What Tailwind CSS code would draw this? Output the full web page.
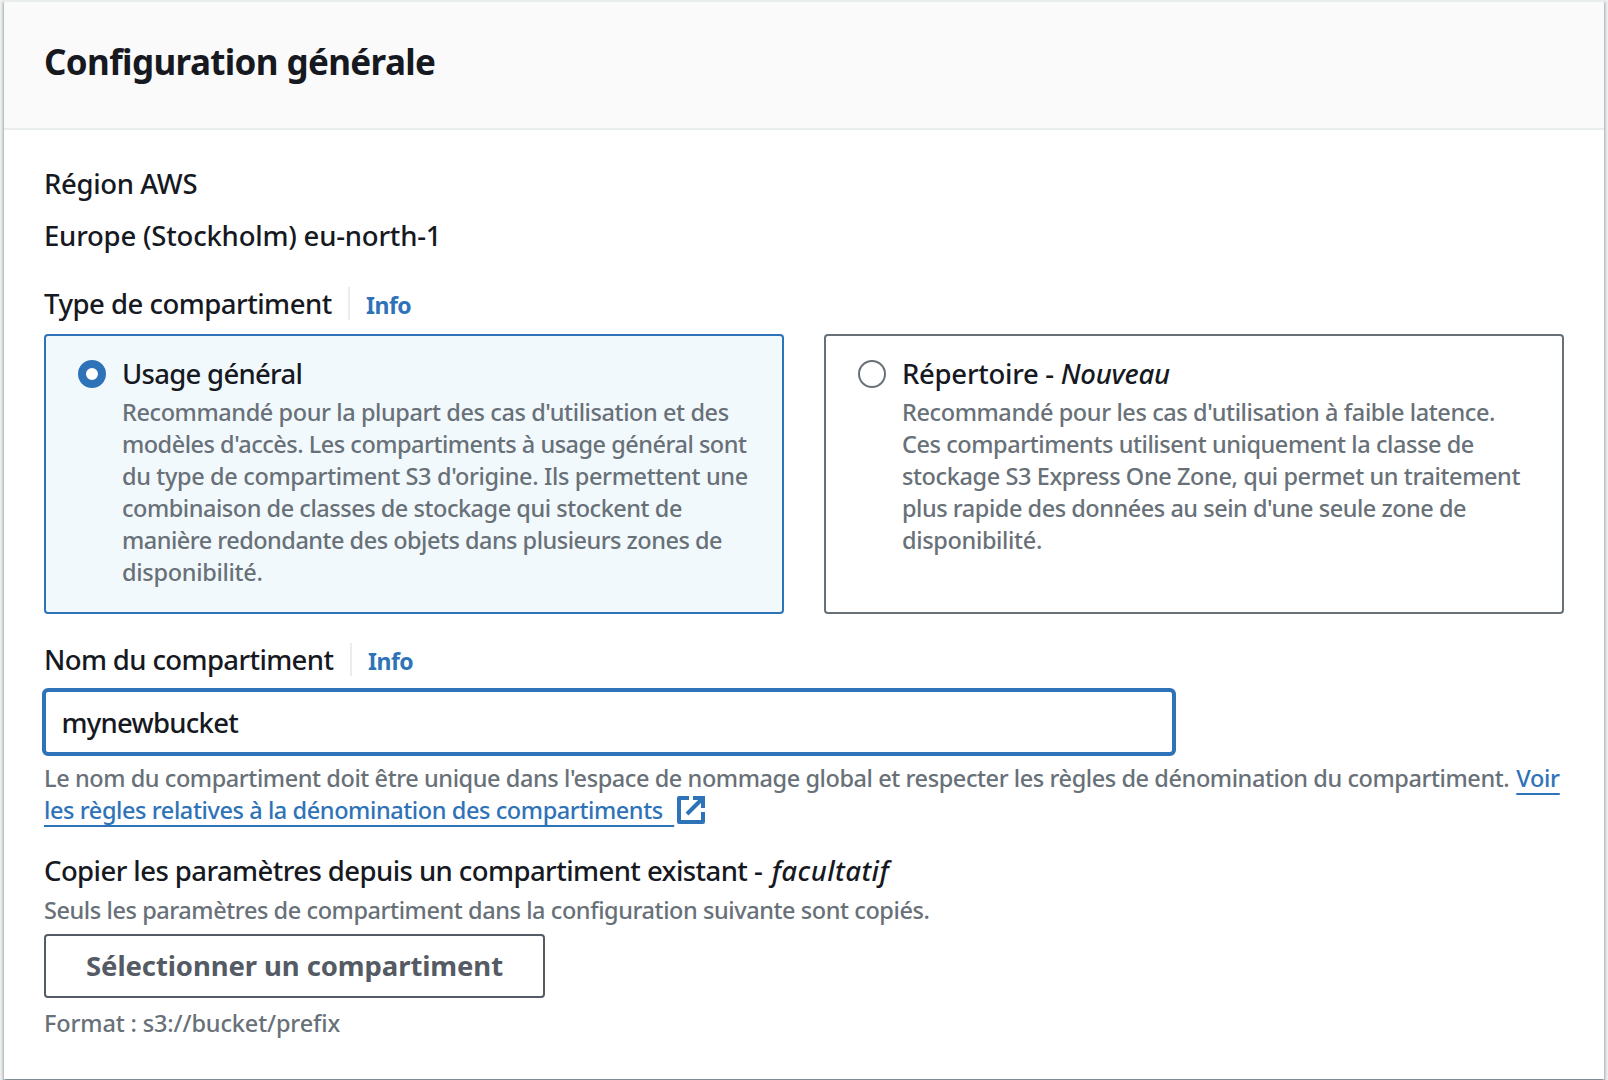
<!DOCTYPE html>
<html lang="fr">
<head>
<meta charset="utf-8">
<title>Configuration générale</title>
<script src="https://cdn.jsdelivr.net/npm/@tailwindcss/browser@4"></script>
</head>
<body class="h-[1080px] overflow-hidden bg-[#eff1f1] font-['Noto_Sans',sans-serif] font-medium text-[#16191f]">
<section class="mx-1 flex h-[1079px] flex-col border-t-2 border-[#eaeded] bg-white shadow-[0_2px_2px_0_rgba(0,28,36,0.3),2px_2px_2px_0_rgba(0,28,36,0.15),-2px_2px_2px_0_rgba(0,28,36,0.15)]">
  <header class="h-32 shrink-0 border-b-2 border-[#eaeded] bg-[#fafafa] px-10 pt-[34px]">
    <h1 class="text-[35px] leading-[52px] font-bold tracking-[-0.63px] whitespace-nowrap">Configuration générale</h1>
  </header>
  <div class="flex flex-col px-10 pt-8 text-[27.5px] leading-[44px] whitespace-nowrap">
    <div class="tracking-[-0.36px]">Région AWS</div>
    <div class="mt-2 tracking-[-0.21px]">Europe (Stockholm) eu-north-1</div>

    <div class="mt-6 flex h-11 items-baseline">
      <span class="w-[304px] tracking-[-0.5px]">Type de compartiment</span>
      <span class="mt-[5px] h-[33px] w-0.5 self-start bg-[#eaeded]"></span>
      <a class="ml-4 text-[23px] font-bold tracking-[-0.5px] text-[#2e73b8]">Info</a>
    </div>

    <div class="mt-2 grid h-[280px] grid-cols-2 gap-10">
      <label class="flex gap-4 rounded-[4px] border-2 border-[#2e73b8] bg-[#f2f9fd] pt-4 pl-8">
        <span class="mt-2 size-7 shrink-0 rounded-full border-8 border-[#2e73b8] bg-white"></span>
        <span class="flex flex-col">
          <span class="tracking-[-0.72px]">Usage général</span>
          <span class="flex flex-col text-[23.5px] leading-8 text-[#687078]">
            <span class="tracking-[-0.41px]">Recommandé pour la plupart des cas d'utilisation et des</span>
            <span class="tracking-[-0.495px]">modèles d'accès. Les compartiments à usage général sont</span>
            <span class="tracking-[-0.36px]">du type de compartiment S3 d'origine. Ils permettent une</span>
            <span class="tracking-[-0.47px]">combinaison de classes de stockage qui stockent de</span>
            <span class="tracking-[-0.51px]">manière redondante des objets dans plusieurs zones de</span>
            <span class="tracking-[-0.31px]">disponibilité.</span>
          </span>
        </span>
      </label>
      <label class="flex gap-4 rounded-[4px] border-2 border-[#687078] bg-white pt-4 pl-8">
        <span class="mt-2 size-7 shrink-0 rounded-full border-2 border-[#687078] bg-white"></span>
        <span class="flex flex-col">
          <span class="tracking-[-0.28px]">Répertoire - <i class="tracking-[-0.27px]">Nouveau</i></span>
          <span class="flex flex-col text-[23.5px] leading-8 text-[#687078]">
            <span class="tracking-[-0.4px]">Recommandé pour les cas d'utilisation à faible latence.</span>
            <span class="tracking-[-0.43px]">Ces compartiments utilisent uniquement la classe de</span>
            <span class="tracking-[-0.4px]">stockage S3 Express One Zone, qui permet un traitement</span>
            <span class="tracking-[-0.47px]">plus rapide des données au sein d'une seule zone de</span>
            <span class="tracking-[-0.35px]">disponibilité.</span>
          </span>
        </span>
      </label>
    </div>

    <div class="mt-6 flex h-11 items-baseline">
      <span class="w-[306px] tracking-[-0.62px]">Nom du compartiment</span>
      <span class="mt-[5px] h-[33px] w-0.5 self-start bg-[#eaeded]"></span>
      <a class="ml-4 text-[23px] font-bold tracking-[-0.5px] text-[#2e73b8]">Info</a>
    </div>
    <div class="mt-1.5 -ml-0.5 flex h-[68px] w-[1134px] items-center rounded-[6px] border-4 border-[#2e73b8] pt-px pl-[15.5px] tracking-[-0.75px]">mynewbucket</div>

    <div class="mt-1.5 text-[23.5px] leading-8 text-[#687078]">
      <div class="flex h-8 gap-[7px]">
        <span class="tracking-[-0.423px]">Le nom du compartiment doit être unique dans l'espace de nommage global et respecter les règles de dénomination du compartiment.</span>
        <a class="tracking-[-0.3px] text-[#2e73b8] underline decoration-2 underline-offset-[6px] [text-decoration-skip-ink:none]">Voir</a>
      </div>
      <div class="flex h-8 gap-[3px] text-[#2e73b8]">
        <a class="tracking-[-0.408px] underline decoration-2 underline-offset-[6px] [text-decoration-skip-ink:none]">les règles relatives à la dénomination des compartiments&nbsp;&nbsp;</a>
        <svg class="mt-0.5 size-7" viewBox="0 0 28 28" fill="none" stroke="currentColor" stroke-width="4"><path d="M12 2H2v24h24V16" stroke-linejoin="round"/><path d="M16 2h10v10M26 2 10 18"/></svg>
      </div>
    </div>

    <div class="mt-[23px] tracking-[-0.57px]">Copier les paramètres depuis un compartiment existant - <i class="ml-[3px] tracking-[0.4px]">facultatif</i></div>
    <div class="mt-px text-[23.5px] leading-8 tracking-[-0.425px] text-[#687078]">Seuls les paramètres de compartiment dans la configuration suivante sont copiés.</div>
    <button class="mt-2 flex h-16 w-[501px] items-center justify-center rounded-[4px] border-2 border-[#545b64] font-bold tracking-[-0.1px] text-[#545b64]">Sélectionner un compartiment</button>
    <div class="mt-[9px] text-[23.5px] leading-8 tracking-[-0.14px] text-[#687078]">Format : s3://bucket/prefix</div>
  </div>
</section>
</body>
</html>
